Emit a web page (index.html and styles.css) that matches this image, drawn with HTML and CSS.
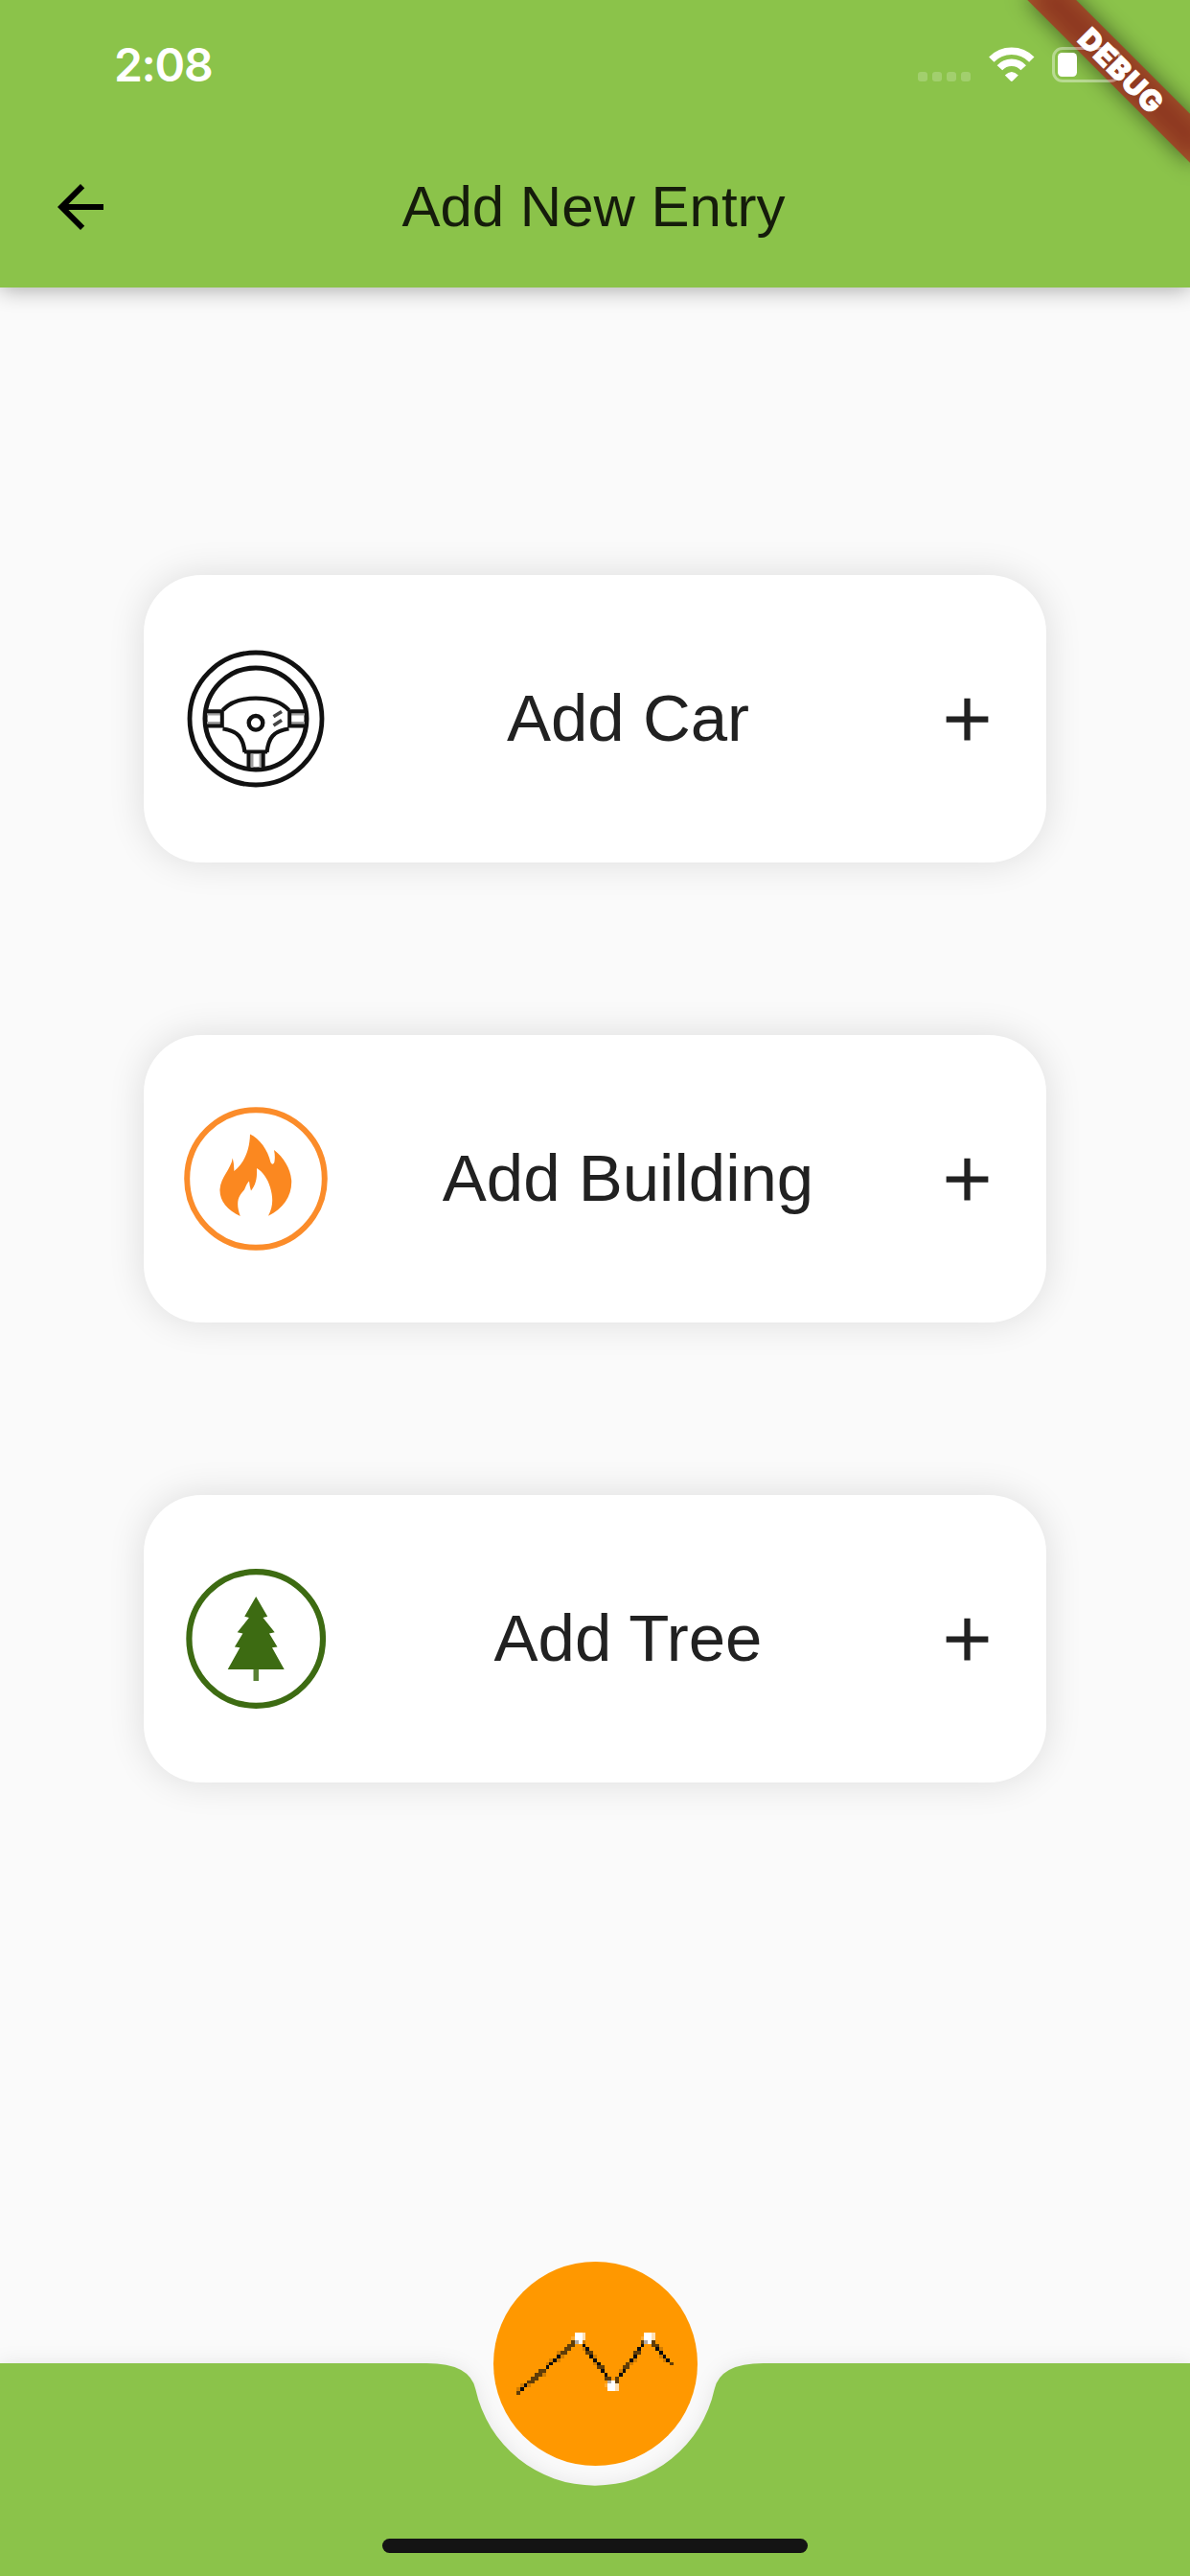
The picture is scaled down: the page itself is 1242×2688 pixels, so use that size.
FILE: index.html
```html
<!DOCTYPE html>
<html lang="en">
<head>
<meta charset="utf-8">
<title>Add New Entry</title>
<link rel="stylesheet" href="styles.css">
</head>
<body>
<div class="screen">
  <header class="header">
    <div class="status">
      <span class="time">2:08</span>
      <div class="indicators">
        <svg class="signal" width="55" height="10" viewBox="0 0 55 10" fill="#fff" fill-opacity=".2"><rect width="10" height="10" rx="3"/><rect x="15" width="10" height="10" rx="3"/><rect x="30" width="10" height="10" rx="3"/><rect x="45" width="10" height="10" rx="3"/></svg>
        <svg class="wifi" width="48" height="37" viewBox="0 0 48 37"><g fill="none" stroke="#fff" stroke-width="7.5"><path d="M2.8 13.1A29.4 29.4 0 0 1 44.8 13.1"/><path d="M11.4 21.7A16.8 16.8 0 0 1 36.2 21.7"/></g><path fill="#fff" d="M16.8 29.6Q23.8 22.2 30.8 29.6L24.8 35.6Q23.8 36.4 22.8 35.6Z"/></svg>
        <svg class="battery" width="78" height="37" viewBox="0 0 78 37"><rect x="1.5" y="1.5" width="69" height="34" rx="9.5" fill="none" stroke="#fff" stroke-opacity=".4" stroke-width="3"/><rect x="6" y="6" width="20" height="25" rx="4.5" fill="#fff"/></svg>
      </div>
    </div>
    <div class="appbar">
      <svg class="back" width="72" height="72" viewBox="0 0 24 24"><path d="M20 11H7.83l5.59-5.59L12 4l-8 8 8 8 1.41-1.41L7.83 13H20v-2z"/></svg>
      <h1 class="title">Add New Entry</h1>
    </div>
    <div class="ribbon"><div class="ribbon-shadow"></div><div class="ribbon-band">DEBUG</div></div>
  </header>

  <main class="entries">
    <div class="card">
      <svg class="icon" viewBox="0 0 150 150" fill="none" stroke="#111">
        <circle cx="75" cy="75" r="69" stroke-width="4.8"/>
        <circle cx="75" cy="75" r="53" stroke-width="5"/>
        <g stroke="#a0a0a0" stroke-width="3"><path d="M24 70H38M24 79.5H38M112 70H126M112 79.5H126M71 112V126M80 112V126"/></g>
        <path d="M21 67.2H39.8V82.5H21M129 67.2H110.2V82.5H129M67.5 127V109.5H82.7V127M63 109.5H87" stroke-width="4"/>
        <path d="M40.5 66C56 49.5 94 49.5 109.5 66M40.5 85.5Q52 87 57.500 93Q62 98 63.500 110M109.500 85.500Q98 87 92.500 93Q88 98 86.500 110" stroke-width="4.200"/>
        <circle cx="75" cy="79.300" r="7.300" stroke-width="4.400"/>
        <path d="M93.500 72.800L102 67.500M93.500 82L102 76.500" stroke="#444" stroke-width="3.600"/>
      </svg>
      <span class="label">Add Car</span>
      <svg class="plus" viewBox="0 0 24 24"><path d="M19 13h-6v6h-2v-6H5v-2h6V5h2v6h6v2z"/></svg>
    </div>
    <div class="card">
      <svg class="icon" viewBox="0 0 150 150">
        <circle cx="75" cy="75" r="71.800" fill="none" stroke="#fb8c2a" stroke-width="6"/>
        <path fill="#fb8820" d="M69 28.500C79 33 87.500 45 90.500 58Q92.500 61.500 94.300 58Q95.500 52 94 45C104 52.500 111 64 112.200 76.500C113 92 104 106 88 113.700C93.500 104 93 94 90 84C87.500 75 82 67.500 76 64C76.500 73 75.500 81 70 87.500Q68.500 83 68 77.500Q66 79 63 86.500C58 92 53 98 58.700 113.900C45 108 37 98 37.500 86C38.500 73 49 65 50.800 53.500Q52.500 60 52.300 67C62 59 68.500 47 69 28.500Z"/>
      </svg>
      <span class="label">Add Building</span>
      <svg class="plus" viewBox="0 0 24 24"><path d="M19 13h-6v6h-2v-6H5v-2h6V5h2v6h6v2z"/></svg>
    </div>
    <div class="card">
      <svg class="icon" viewBox="0 0 150 150" fill="#3d6b12">
        <circle cx="75.200" cy="75" r="69.800" fill="none" stroke="#3d6b12" stroke-width="6.200"/>
        <path d="M75.200 31L87.200 51.700L82.500 53L94.700 68.300L89 69.500L97.500 83.500L92 84.300L104.700 107H45.700L58.400 84.300L52.900 83.500L61.400 69.500L55.700 68.300L67.900 53L63.200 51.700Z"/>
        <path d="M72.500 107H78V119H72.500Z" opacity=".85"/>
      </svg>
      <span class="label">Add Tree</span>
      <svg class="plus" viewBox="0 0 24 24"><path d="M19 13h-6v6h-2v-6H5v-2h6V5h2v6h6v2z"/></svg>
    </div>
  </main>

  <footer class="nav">
    <svg class="nav-shape" viewBox="0 0 1242 222"><path fill="#8bc34a" d="M0 0H445.500Q490.500 0 496.400 27.200A127.500 127.500 0 0 0 745.600 27.200Q751.500 0 796.500 0H1242V222H0Z"/></svg>
    <div class="fab">
      <svg width="164" height="65" viewBox="0 0 43 17" fill="none" stroke="#0c0c0c" shape-rendering="crispEdges">
        <path d="M1 15.500h1M2 14.500h1M8 9.500h1M9 8.500h1M10 7.500h1M11 6.500h1M18 3.500h1M19 4.500h1M20 6.500h1M21 7.500h1M22 8.500h1M23 10.500h1M24 11.500h1M28 11.500h1M29 10.500h1M31 7.500h1M32 6.500h1M33 4.500h1M34 3.500h1M38 4.500h1M39 5.500h1M40 6.500h1M41 7.500h1"/>
        <path stroke-opacity=".65" d="M0 16.500h1M3 13.500h1M4 13.500h1M4 12.500h2M5 11.500h2M6 10.500h2M12 5.500h2M13 4.500h2M14 3.500h2M15 2.500h1M19 5.500h2M22 9.500h2M24 12.500h2M27 12.500h1M27 13.500h1M29 9.500h2M30 8.500h1M32 5.500h2M34 2.500h1M37 2.500h1M37 3.500h2M42 8.500h1"/>
        <path stroke-opacity=".18" d="M0 15.500h1M1 14.500h1M3 14.500h1M7 11.500h1M8 8.500h1M9 7.500h1M11 7.500h1M12 6.500h1M11 5.500h1M18 2.500h1M18 4.500h1M21 6.500h1M21 8.500h1M31 8.500h1M28 10.500h1M32 7.500h1M39 4.500h1M39 6.500h1M40 7.500h1"/>
        <path stroke="#fff" d="M16 .5h2M16 1.500h2M17 2.500h1M35 .5h2M35 1.500h2M36 2.500h1M26 13.500h1M25 14.500h2M25 15.500h2"/>
        <path stroke="#b5aca4" d="M16 2.500h1M35 2.500h1M25 13.500h1"/>
        <path stroke="#fff" stroke-opacity=".7" d="M18 .5h1M18 1.500h1M37 .5h1M37 1.500h1M27 14.500h1M27 15.500h1"/>
        <path stroke="#fff" stroke-opacity=".2" d="M15 1.500h1M34 1.500h1M24 14.500h1"/>
      </svg>
    </div>
    <div class="home-indicator"></div>
  </footer>
</div>
</body>
</html>
```
FILE: styles.css
```css
* { box-sizing: border-box; }
body { margin: 0; }
svg { display: block; flex: none; }

.screen {
  width: 1242px;
  height: 2688px;
  display: flex;
  flex-direction: column;
  background: #fafafa;
  color: #212121;
  font-family: "Liberation Sans", Arial, sans-serif;
  overflow: hidden;
}

.header {
  position: relative;
  height: 300px;
  background: #8bc34a;
  box-shadow: 0 2px 22px rgba(0, 0, 0, .33);
}

.status {
  position: relative;
  z-index: 2;
  height: 132px;
  padding: 0 66px 0 119px;
  display: flex;
  align-items: center;
  justify-content: space-between;
}
.time {
  color: #fff;
  font: 600 48px/60px Inter, sans-serif;
  letter-spacing: -1.3px;
  margin-top: 4px;
}
.indicators { display: flex; align-items: flex-end; margin-top: 3px; }
.signal { margin-bottom: 1px; }
.wifi { margin-left: 19px; }
.battery { margin-left: 18px; }

.appbar {
  height: 168px;
  padding: 0 48px;
  display: grid;
  grid-template-columns: 72px 1fr 72px;
  align-items: center;
}
.title {
  margin: 0;
  padding-right: 3px;
  font-size: 60px;
  font-weight: 400;
  line-height: 70px;
  text-align: center;
  color: #151c0b;
}

.ribbon {
  position: absolute;
  top: 0;
  right: 0;
  width: 200px;
  height: 200px;
  overflow: hidden;
}
.ribbon-shadow,
.ribbon-band {
  position: absolute;
  left: 80px;
  top: 84px;
  width: 240px;
  height: 36px;
  transform: rotate(45deg);
  transform-origin: 120px -84px;
}
.ribbon-shadow {
  background: rgba(0, 0, 0, .5);
  filter: blur(11.9px);
}
.ribbon-band {
  background: rgba(183, 28, 28, .627);
  color: #fff;
  font: 900 30.6px/37px Inter, sans-serif;
  letter-spacing: .9px;
  padding-left: 3px;
  -webkit-text-stroke: .8px #fff;
  text-align: center;
}

.entries {
  flex: 1;
  padding: 300px 150px 0;
  display: flex;
  flex-direction: column;
  gap: 180px;
}
.card {
  height: 300px;
  padding: 0 45px 0 42px;
  display: flex;
  align-items: center;
  border-radius: 60px;
  background: #fff;
  box-shadow: 0 0 38px rgba(0, 0, 0, .12);
}
.icon { width: 150px; height: 150px; }
.label {
  flex: 1;
  padding-right: 3px;
  font-size: 69px;
  line-height: 80px;
  text-align: center;
}
.plus { width: 75px; height: 75px; fill: #212121; }

.nav {
  position: relative;
  height: 222px;
  display: flex;
  flex-direction: column;
  align-items: center;
  justify-content: flex-end;
  padding-bottom: 24px;
}
.nav-shape {
  position: absolute;
  inset: 0;
  width: 1242px;
  height: 222px;
  overflow: visible;
  filter: drop-shadow(0 0 10px rgba(0, 0, 0, .08));
}
.fab {
  position: absolute;
  left: 514.500px;
  top: -106.500px;
  width: 213px;
  height: 213px;
  border-radius: 50%;
  background: #ff9800;
  display: flex;
  align-items: center;
  justify-content: center;
}
.home-indicator {
  position: relative;
  width: 444px;
  height: 15px;
  border-radius: 7.500px;
  background: #141414;
}
```
